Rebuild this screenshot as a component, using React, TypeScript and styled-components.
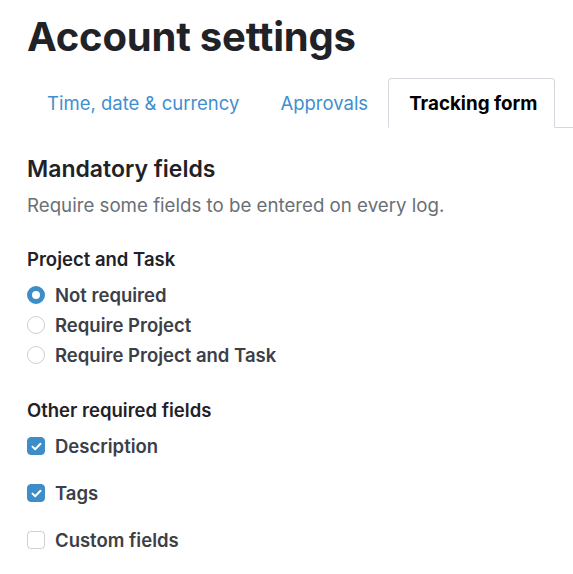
import { FC } from "react";
import styled, { createGlobalStyle } from "styled-components";

const GlobalStyle = createGlobalStyle`
  body {
    margin: 0;
    background: #ffffff;
    font-family: Inter, "Noto Sans", sans-serif;
    color: #1f2227;
  }
`;

const Page = styled.div`
  padding: 12px 0 0 26px;
`;

const Title = styled.h1`
  margin: 0 0 0 1px;
  font-size: 40px;
  font-weight: 700;
  line-height: 50px;
  color: #1f2227;
  letter-spacing: -0.2px;
`;

const TabBar = styled.div`
  margin-top: 16px;
  display: flex;
  align-items: flex-end;
  border-bottom: 1px solid #d5d9df;
`;

const Tab = styled.div<{ active?: boolean }>`
  padding: ${(p) => (p.active ? "0 17px 0 20px" : "0 19px 0 20px")};
  height: 48px;
  display: flex;
  align-items: center;
  font-size: ${(p) => (p.active ? "18.8px" : "18.5px")};
  font-weight: ${(p) => (p.active ? 700 : 400)};
  color: ${(p) => (p.active ? "#000000" : "#3f8fcf")};
  margin-bottom: -1px;
  border: 1px solid ${(p) => (p.active ? "#d5d9df" : "transparent")};
  border-bottom-color: ${(p) => (p.active ? "#ffffff" : "transparent")};
  border-radius: 4px 4px 0 0;
  background: #ffffff;
`;

const Section = styled.section`
  padding-top: 26px;
  padding-left: 1px;
`;

const SectionTitle = styled.h2`
  margin: 0;
  font-size: 23px;
  font-weight: 600;
  line-height: 30px;
  color: #1f2227;
`;

const Hint = styled.p`
  margin: 10px 0 0;
  font-size: 18.7px;
  line-height: 24px;
  color: #6b6f76;
`;

const GroupLabel = styled.div<{ spaceAbove: number }>`
  margin-top: ${(p) => p.spaceAbove}px;
  font-size: 18.5px;
  font-weight: 600;
  line-height: 24px;
  color: #1f2227;
`;

const OptionList = styled.div<{ rowGap: number; spaceAbove: number }>`
  margin-top: ${(p) => p.spaceAbove}px;
  display: flex;
  flex-direction: column;
  gap: ${(p) => p.rowGap}px;
`;

const Option = styled.label`
  display: flex;
  align-items: center;
  gap: 10px;
  font-size: 18.5px;
  font-weight: 600;
  line-height: 24px;
  color: #3b4048;
  height: 24px;
`;

const RadioMark = styled.span<{ checked?: boolean }>`
  box-sizing: border-box;
  width: 18px;
  height: 18px;
  border-radius: 50%;
  border: ${(p) => (p.checked ? "5px solid #3c8dc8" : "1px solid #ccd1d8")};
  background: #ffffff;
  flex-shrink: 0;
`;

const CheckMark = styled.span<{ checked?: boolean }>`
  box-sizing: border-box;
  width: 18px;
  height: 18px;
  border-radius: 4px;
  border: 1px solid ${(p) => (p.checked ? "#3c8dc8" : "#ccd1d8")};
  background: ${(p) => (p.checked ? "#3c8dc8" : "#ffffff")};
  display: flex;
  align-items: center;
  justify-content: center;
  flex-shrink: 0;
`;

const Spacer = styled.div`
  height: 40px;
`;

const Radio: FC<{ label: string; checked?: boolean }> = ({ label, checked }) => (
  <Option>
    <RadioMark checked={checked} />
    {label}
  </Option>
);

const Checkbox: FC<{ label: string; checked?: boolean }> = ({
  label,
  checked,
}) => (
  <Option>
    <CheckMark checked={checked}>
      {checked && (
        <svg width="11" height="9" viewBox="0 0 11 9">
          <path
            d="M1.5 4.6 L4.2 7.2 L9.5 1.8"
            fill="none"
            stroke="#ffffff"
            strokeWidth="2"
            strokeLinecap="round"
            strokeLinejoin="round"
          />
        </svg>
      )}
    </CheckMark>
    {label}
  </Option>
);

const App: FC = () => {
  return (
    <Page>
      <GlobalStyle />
      <Title>Account settings</Title>
      <TabBar>
        <Tab>Time, date &amp; currency</Tab>
        <Tab>Approvals</Tab>
        <Tab active>Tracking form</Tab>
      </TabBar>
      <Section>
        <SectionTitle>Mandatory fields</SectionTitle>
        <Hint>Require some fields to be entered on every log.</Hint>
        <GroupLabel spaceAbove={29}>Project and Task</GroupLabel>
        <OptionList rowGap={6} spaceAbove={12}>
          <Radio label="Not required" checked />
          <Radio label="Require Project" />
          <Radio label="Require Project and Task" />
        </OptionList>
        <GroupLabel spaceAbove={31}>Other required fields</GroupLabel>
        <OptionList rowGap={23} spaceAbove={12}>
          <Checkbox label="Description" checked />
          <Checkbox label="Tags" checked />
          <Checkbox label="Custom fields" />
        </OptionList>
        <Spacer />
      </Section>
    </Page>
  );
};

export default App;
